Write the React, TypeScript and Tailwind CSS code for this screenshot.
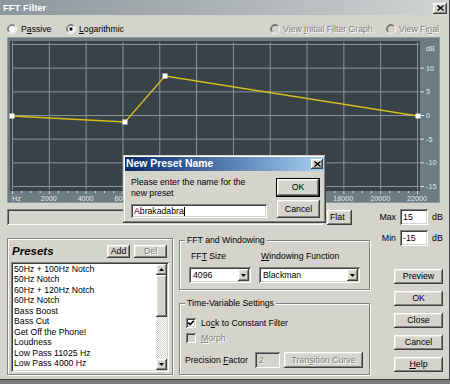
import React from "react";

const raised =
  "shadow-[inset_-1px_-1px_0_#404040,inset_1px_1px_0_#ffffff,inset_-2px_-2px_0_#808080,inset_2px_2px_0_#e6e4de]";
const sunken =
  "shadow-[inset_1px_1px_0_#808080,inset_-1px_-1px_0_#ffffff,inset_2px_2px_0_#404040,inset_-2px_-2px_0_#d4d3cc]";
const etched = "border border-[#808080] shadow-[inset_1px_1px_0_#ffffff,1px_1px_0_#ffffff]";
const dim = "text-[#808080] [text-shadow:1px_1px_0_#ffffff]";

function Btn({
  children,
  className = "",
  disabled = false,
}: {
  children: React.ReactNode;
  className?: string;
  disabled?: boolean;
}) {
  return (
    <div
      className={`flex items-center justify-center bg-[#d4d3cc] text-[8.8px] leading-none ${raised} ${
        disabled ? dim : "text-black"
      } ${className}`}
    >
      {children}
    </div>
  );
}

function Radio({ checked = false, disabled = false }: { checked?: boolean; disabled?: boolean }) {
  return (
    <svg width="10" height="10" viewBox="0 0 12 12" className="shrink-0">
      <circle cx="6" cy="6" r="5.5" fill={disabled ? "#d4d3cc" : "#ffffff"} />
      <path d="M2.1 9.9 A5.5 5.5 0 0 1 9.9 2.1" stroke="#808080" fill="none" />
      <path d="M9.9 2.1 A5.5 5.5 0 0 1 2.1 9.9" stroke="#ffffff" fill="none" />
      <path d="M2.8 9.2 A4.5 4.5 0 0 1 9.2 2.8" stroke="#404040" fill="none" />
      <path d="M9.2 2.8 A4.5 4.5 0 0 1 2.8 9.2" stroke="#d4d3cc" fill="none" />
      {checked && <circle cx="6" cy="6" r="2" fill="#000000" />}
    </svg>
  );
}

function Check({ checked = false, disabled = false }: { checked?: boolean; disabled?: boolean }) {
  return (
    <div className={`w-[10px] h-[10px] shrink-0 ${sunken} ${disabled ? "bg-[#d4d3cc]" : "bg-white"}`}>
      {checked && (
        <svg width="10" height="10" viewBox="0 0 10 10" className="block">
          <path d="M2.3 4.6 L4.2 6.6 L7.8 2.8" stroke="#000" strokeWidth="1.6" fill="none" />
        </svg>
      )}
    </div>
  );
}

function Arrow({ up = false }: { up?: boolean }) {
  return (
    <svg width="5" height="3" viewBox="0 0 5 3" className="block">
      <polygon points={up ? "0,3 5,3 2.5,0" : "0,0 5,0 2.5,3"} fill="#000" />
    </svg>
  );
}

function Combo({ value, className = "" }: { value: string; className?: string }) {
  return (
    <div className={`flex items-center h-[16px] bg-white p-[2px] ${sunken} ${className}`}>
      <span className="flex-1 pl-[2px] text-[8.7px] leading-none">{value}</span>
      <div className={`w-[11px] h-[12px] flex items-center justify-center bg-[#d4d3cc] ${raised}`}>
        <Arrow />
      </div>
    </div>
  );
}

function CloseBtn({ className = "" }: { className?: string }) {
  return (
    <div className={`flex items-center justify-center bg-[#d4d3cc] ${raised} ${className}`}>
      <svg width="7" height="6" viewBox="0 0 7 6" className="block">
        <path d="M0.5 0.5 L6.5 5.5 M6.5 0.5 L0.5 5.5" stroke="#000" strokeWidth="1.4" />
      </svg>
    </div>
  );
}

const hzLabels = ["Hz", "2000", "4000", "6000", "8000", "10000", "12000", "14000", "16000", "18000", "20000", "22000"];
const dbLevels = [15, 10, 5, 0, -5, -10, -15];
const curve = [
  [12, 116],
  [125, 122],
  [165, 76],
  [418, 116],
];

function Graph() {
  const gx = (i: number) => 12 + (i * 405) / 11;
  const dy = (db: number) => 115 - (db * 71) / 15;
  const ticks = Array.from({ length: 45 }, (_, k) => 12 + (k * 405) / 44);
  return (
    <div className="ml-[7px] w-[433px] h-[166px]">
      <svg width="433" height="166" viewBox="7 37 433 166" className="block">
        <rect x="7" y="37" width="433" height="166" fill="#6d7b82" />
        <rect x="7.5" y="37.5" width="432" height="165" fill="none" stroke="#8d999e" />
        <rect x="10" y="41" width="410" height="150" fill="#394246" />
        {hzLabels.map((_, i) => (
          <line key={"v" + i} x1={gx(i) + 0.5} y1="42" x2={gx(i) + 0.5} y2="190" stroke="#8a9599" />
        ))}
        {dbLevels.map((db) => (
          <line key={"h" + db} x1="12" y1={dy(db) + 0.5} x2="419" y2={dy(db) + 0.5} stroke="#8a9599" />
        ))}
        {ticks.map((x, k) => (
          <line key={"t" + k} x1={x + 0.5} y1="191" x2={x + 0.5} y2={k % 4 === 0 ? 194 : 193} stroke="#dfe4e4" />
        ))}
        {dbLevels.slice(1).map((db) => (
          <line key={"r" + db} x1="420" y1={dy(db) + 0.5} x2="424" y2={dy(db) + 0.5} stroke="#dfe4e4" />
        ))}
        <polyline
          points={curve.map((p) => p.join(",")).join(" ")}
          fill="none"
          stroke="#d6bd22"
          strokeWidth="1.3"
        />
        {curve.map(([x, y], i) => (
          <rect key={"p" + i} x={x - 2.5} y={y - 2.5} width="5" height="5" fill="#ffffff" />
        ))}
        <g fontFamily="'Liberation Sans', Arial, sans-serif" fontSize="7.2" fill="#e6eaea">
          {hzLabels.map((l, i) => (
            <text key={"l" + i} x={i === 0 ? 12 : gx(i)} y="201" textAnchor={i === 0 ? "start" : "middle"}>
              {l}
            </text>
          ))}
          <text x="426" y="51">dB</text>
          {dbLevels.slice(1).map((db) => (
            <text key={"d" + db} x="426" y={dy(db) + 3}>
              {db}
            </text>
          ))}
        </g>
      </svg>
    </div>
  );
}

const presets = [
  "50Hz + 100Hz Notch",
  "50Hz Notch",
  "60Hz + 120Hz Notch",
  "60Hz Notch",
  "Bass Boost",
  "Bass Cut",
  "Get Off the Phone!",
  "Loudness",
  "Low Pass 11025 Hz",
  "Low Pass 4000 Hz",
  "Low Pass 8000 Hz",
];

export default function App() {
  return (
    <div className="relative w-[450px] h-[384px] overflow-hidden bg-[#7c7c7c] font-['Liberation_Sans',Arial,sans-serif] text-black">
      <div className="w-[450px] h-[380px] flex flex-col bg-[#d4d3cc] border-r border-b border-[#404040]">
        {/* Title bar */}
        <div className="h-[15px] flex items-center bg-gradient-to-r from-[#8b959b] to-[#cfd3d3]">
          <span className="pl-[3px] text-[9.5px] font-bold text-white leading-none">FFT Filter</span>
          <CloseBtn className="ml-auto mr-[2px] mt-[1px] w-[14px] h-[11px]" />
        </div>

        {/* Radio row */}
        <div className="mt-[6px] h-[16px] flex items-center text-[8.7px] leading-none">
          <div className="ml-[7px] w-[59px] flex items-center gap-[4px]">
            <Radio />
            <span>
              P<span className="underline">a</span>ssive
            </span>
          </div>
          <div className="w-[204px] flex items-center gap-[3px]">
            <Radio checked />
            <span>
              <span className="underline">L</span>ogarithmic
            </span>
          </div>
          <div className={`w-[116px] flex items-center gap-[3px] ${dim}`}>
            <Radio disabled />
            <span>
              View <span className="underline">I</span>nitial Filter Graph
            </span>
          </div>
          <div className={`flex items-center gap-[3px] ${dim}`}>
            <Radio disabled />
            <span>
              View Fi<span className="underline">n</span>al
            </span>
          </div>
        </div>

        <Graph />

        <div className="mt-[6px] flex">
          {/* Left + middle */}
          <div className="w-[370px]">
            <div className="flex h-[16px]">
              <div className={`ml-[7px] w-[316px] h-[16px] ${sunken}`} />
              <Btn className="ml-[4px] mt-[1px] w-[25px] h-[15px] !justify-start pl-[3px]">Flat</Btn>
            </div>

            <div className="mt-[13px] flex">
              {/* Presets */}
              <div className={`ml-[7px] w-[166px] h-[137px] ${etched}`}>
                <div className="mt-[6px] h-[13px] flex items-center">
                  <div className="w-[99px] pl-[4px] text-[11.5px] font-bold italic leading-none">Presets</div>
                  <Btn className="w-[23px] h-[13px]">Add</Btn>
                  <Btn disabled className="ml-[4px] w-[33px] h-[13px]">
                    Del
                  </Btn>
                </div>
                <div className={`ml-[3px] mt-[4px] w-[158px] h-[110px] bg-white p-[2px] flex ${sunken}`}>
                  <div className="flex-1 overflow-hidden pl-[1px] text-[8.7px] leading-[10.45px]">
                    {presets.map((p) => (
                      <div key={p} className="whitespace-nowrap">
                        {p}
                      </div>
                    ))}
                  </div>
                  <div className="w-[11px] flex flex-col bg-[#ebeae5]">
                    <div className={`h-[11px] flex items-center justify-center bg-[#d4d3cc] ${raised}`}>
                      <Arrow up />
                    </div>
                    <div className={`h-[42px] bg-[#d4d3cc] ${raised}`} />
                    <div className="flex-1 bg-[repeating-conic-gradient(#d4d3cc_0_25%,#ffffff_0_50%)] bg-[length:2px_2px]" />
                    <div className={`h-[11px] flex items-center justify-center bg-[#d4d3cc] ${raised}`}>
                      <Arrow />
                    </div>
                  </div>
                </div>
              </div>

              {/* Middle groups */}
              <div className="ml-[6px] w-[191px] pt-[2px]">
                <div className={`relative h-[50px] ${etched}`}>
                  <span className="absolute -top-[6px] left-[5px] px-[2px] bg-[#d4d3cc] text-[8.7px] leading-[11px]">
                    FFT and Windowing
                  </span>
                  <div className="flex pl-[9px] pt-[10px] text-[8.7px]">
                    <div className="w-[62px]">
                      <div className="pl-[2px] h-[11px] leading-[11px]">
                        FF<span className="underline">T</span> Size
                      </div>
                      <Combo value="4096" className="mt-[5px] w-[62px]" />
                    </div>
                    <div className="ml-[8px] w-[101px]">
                      <div className="pl-[2px] h-[11px] leading-[11px]">
                        <span className="underline">W</span>indowing Function
                      </div>
                      <Combo value="Blackman" className="mt-[5px] w-[101px]" />
                    </div>
                  </div>
                </div>

                <div className={`relative mt-[13px] h-[72px] ${etched}`}>
                  <span className="absolute -top-[6px] left-[5px] px-[2px] bg-[#d4d3cc] text-[8.7px] leading-[11px]">
                    Time-Variable Settings
                  </span>
                  <div className="pl-[6px] pt-[14px] text-[8.7px] leading-none">
                    <div className="h-[10px] flex items-center gap-[5px]">
                      <Check checked />
                      <span>
                        Lo<span className="underline">c</span>k to Constant Filter
                      </span>
                    </div>
                    <div className="mt-[5px] h-[10px] flex items-center gap-[5px]">
                      <Check disabled />
                      <span className={dim}>
                        <span className="underline">M</span>orph
                      </span>
                    </div>
                    <div className="mt-[9px] -ml-[1px] h-[16px] flex items-center">
                      <span className="w-[70px]">
                        Precision <span className="underline">F</span>actor
                      </span>
                      <div className={`w-[25px] h-[16px] flex items-center pl-[4px] bg-[#d4d3cc] ${sunken} ${dim}`}>
                        2
                      </div>
                      <Btn disabled className="ml-[4px] w-[79px] h-[16px]">
                        Tran<span className="underline">s</span>ition Curve
                      </Btn>
                    </div>
                  </div>
                </div>
              </div>
            </div>
          </div>

          {/* Right column */}
          <div className="w-[79px] text-[8.8px] leading-none">
            <div className="h-[16px] flex items-center">
              <span className="w-[30px] pr-[4px] text-right">Max</span>
              <div className={`w-[28px] h-[16px] flex items-center pl-[3px] bg-white ${sunken}`}>15</div>
              <span className="ml-[4px]">dB</span>
            </div>
            <div className="mt-[5px] h-[16px] flex items-center">
              <span className="w-[30px] pr-[4px] text-right">Min</span>
              <div className={`w-[28px] h-[16px] flex items-center pl-[3px] bg-white ${sunken}`}>-15</div>
              <span className="ml-[4px]">dB</span>
            </div>
            <div className="mt-[23px] ml-[24px] w-[49px] flex flex-col gap-[7px]">
              <Btn className="h-[15px]">Preview</Btn>
              <Btn className="h-[15px]">OK</Btn>
              <Btn className="h-[15px]">Close</Btn>
              <Btn className="h-[15px]">Cancel</Btn>
              <Btn className="h-[15px]">
                <span className="underline">H</span>elp
              </Btn>
            </div>
          </div>
        </div>
      </div>

      {/* New Preset Name dialog */}
      <div
        className={`absolute left-[123px] top-[155px] w-[203px] h-[68px] bg-[#d4d3cc] p-[2px] flex flex-col shadow-[inset_-1px_-1px_0_#404040,inset_1px_1px_0_#d4d3cc,inset_-2px_-2px_0_#808080,inset_2px_2px_0_#ffffff]`}
      >
        <div className="h-[14px] flex items-center bg-gradient-to-r from-[#0b2a6c] to-[#a9d1f3]">
          <span className="pl-[1px] text-[10.4px] font-bold text-white leading-none">New Preset Name</span>
          <CloseBtn className="ml-auto mr-[1px] w-[12px] h-[10px]" />
        </div>
        <div className="flex">
          <div className="w-[151px] pl-[6px] pt-[6px] text-[8.7px]">
            <div className="leading-[11px]">
              Please enter the name for the
              <br />
              new preset
            </div>
            <div className={`mt-[5px] w-[136px] h-[14px] bg-white flex items-center pl-[3px] ${sunken}`}>
              <span className="leading-none">Abrakadabra</span>
              <span className="w-px h-[9px] bg-black" />
            </div>
          </div>
          <div className="pt-[7px] flex flex-col">
            <div className="w-[44px] h-[19px] border border-black">
              <Btn className="w-full h-full">OK</Btn>
            </div>
            <Btn className="mt-[3px] ml-[1px] w-[43px] h-[18px]">Cancel</Btn>
          </div>
        </div>
      </div>
    </div>
  );
}
